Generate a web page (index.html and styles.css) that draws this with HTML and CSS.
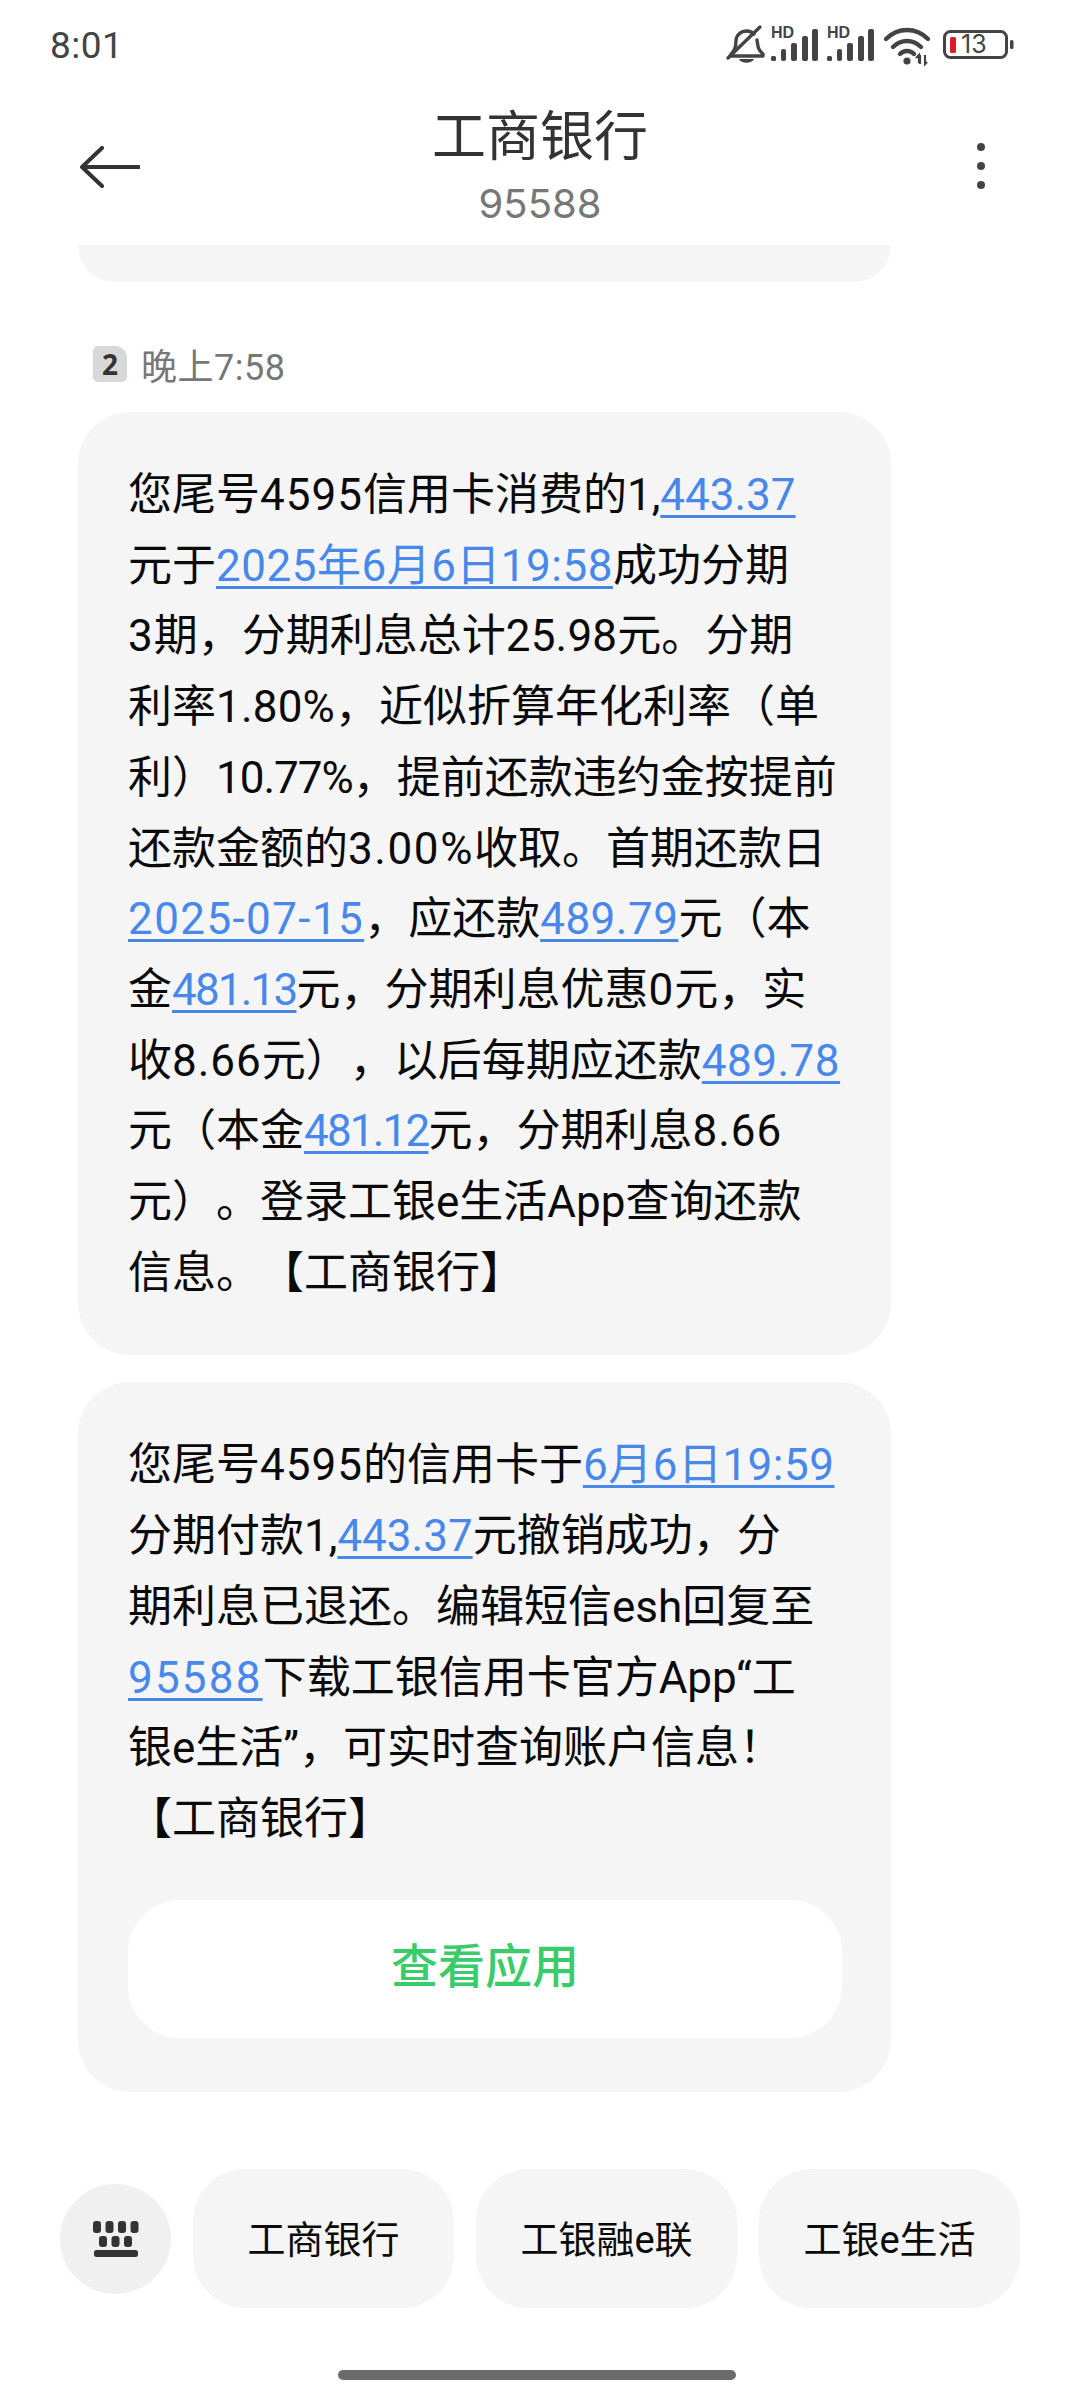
FILE: index.html
```html
<!DOCTYPE html>
<html lang="zh-CN">
<head>
<meta charset="utf-8">
<title>工商银行</title>
<link rel="stylesheet" href="styles.css">
</head>
<body>
<div class="screen">
  <div class="status">
    <span class="time">8:01</span>
    <svg class="status-icons" width="290" height="44" viewBox="0 0 290 44">
      <g fill="none" stroke="#444" stroke-width="3.4" stroke-linecap="round" stroke-linejoin="round">
        <path d="M7 31 C12 27 12 22 12 18 C12 12 17 8 23 8 C26 8 28 9 30 11"/>
        <path d="M33 17 C34 24 34 27 39 31 L39 33 L6 33"/>
        <path d="M4 35 L36 4"/>
      </g>
      <path d="M15 36 H30 C28 41 17 41 15 36 Z" fill="#444"/>
      <g class="sig">
        <text x="47" y="15" class="hd">HD</text>
        <rect x="47" y="33" width="5" height="5" rx="1.5"/>
        <rect x="57" y="26" width="5" height="12" rx="2"/>
        <rect x="67" y="20" width="6" height="18" rx="2"/>
        <rect x="78" y="13" width="6" height="25" rx="2"/>
        <rect x="88" y="6" width="6" height="32" rx="2"/>
      </g>
      <g class="sig">
        <text x="103" y="15" class="hd">HD</text>
        <rect x="103" y="33" width="5" height="5" rx="1.5"/>
        <rect x="113" y="26" width="5" height="12" rx="2"/>
        <rect x="123" y="20" width="6" height="18" rx="2"/>
        <rect x="134" y="13" width="6" height="25" rx="2"/>
        <rect x="144" y="6" width="6" height="32" rx="2"/>
      </g>
      <g fill="none" stroke="#444" stroke-width="4.4" stroke-linecap="round">
        <path d="M162 16 C174 4 192 4 204 16"/>
        <path d="M169 24 C177 16 189 16 197 24"/>
        <path d="M176 31 C180 27 186 27 190 31"/>
      </g>
      <circle cx="183" cy="38" r="3.6" fill="#444"/>
      <path d="M196 32 v9 M192 35 l3 -3 v8 M201 41 v-9 M203 39 l-2 2 v-9" fill="none" stroke="#444" stroke-width="2.2"/>
      <rect x="220.500" y="8.500" width="62" height="26" rx="6" fill="none" stroke="#444" stroke-width="3"/>
      <rect x="226" y="14" width="6" height="16" rx="1.500" fill="#dc1f26"/>
      <text x="237" y="30" class="batt">13</text>
      <rect x="286" y="17" width="3.500" height="9" rx="1.500" fill="#444"/>
    </svg>
  </div>

  <header class="bar">
    <svg class="back" width="60" height="42" viewBox="0 0 60 42">
      <path d="M22 2 L2 21 L22 40 M3 21 H59" fill="none" stroke="#333" stroke-width="4" stroke-linecap="round" stroke-linejoin="round"/>
    </svg>
    <div class="heading">
      <div class="title">工商银行</div>
      <div class="number">95588</div>
    </div>
    <div class="more"><i></i><i></i><i></i></div>
  </header>

  <main class="thread">
    <div class="bubble-tail"></div>
    <div class="stamp"><span class="sim">2</span><span class="stamp-text">晚上7:58</span></div>
    <div class="bubble">您尾号<span class="n">4595</span>信用卡消费的1,<a class="plain">443.37</a><br>元于<a>2025年6月6日19:58</a>成功分期<br><span class="n">3</span>期，分期利息总计<span class="m">25.98</span>元。分期<br>利率<span class="m">1.80%</span>，近似折算年化利率（单<br>利）<span class="one">10.77%</span>，提前还款违约金按提前<br>还款金额的<span class="w">3.00%</span>收取。首期还款日<br><a class="date">2025-07-15</a>，应还款<a>489.79</a>元（本<br>金<a class="one">481.13</a>元，分期利息优惠<span class="n">0</span>元，实<br>收<span class="n">8.66</span>元），以后每期应还款<a>489.78</a><br>元（本金<a class="one">481.12</a>元，分期利息<span class="n">8.66</span><br>元）。登录工银e生活App查询还款<br>信息。【工商银行】</div>
    <div class="bubble bubble-app">您尾号<span class="n">4595</span>的信用卡于<a>6月6日19:59</a><br>分期付款1,<a class="plain">443.37</a>元撤销成功，分<br>期利息已退还。编辑短信esh回复至<br><a class="phone">95588</a>下载工银信用卡官方App“工<br>银e生活”，可实时查询账户信息！<br>【工商银行】
      <div class="app-btn">查看应用</div>
    </div>
  </main>

  <footer class="suggest">
    <div class="kbd">
      <svg width="46" height="36" viewBox="0 0 46 36" fill="#333">
        <rect x="0" y="0" width="8" height="12" rx="3"/><rect x="12.500" y="0" width="8" height="12" rx="3"/><rect x="25" y="0" width="8" height="12" rx="3"/><rect x="37.500" y="0" width="8" height="12" rx="3"/>
        <rect x="6" y="15" width="8" height="11" rx="3"/><rect x="18.500" y="15" width="8" height="11" rx="3"/><rect x="31" y="15" width="8" height="11" rx="3"/>
        <rect x="1" y="29" width="44" height="7" rx="2.500"/>
      </svg>
    </div>
    <div class="chip">工商银行</div>
    <div class="chip">工银融e联</div>
    <div class="chip">工银e生活</div>
  </footer>
  <div class="home-wrap"><div class="home"></div></div>
</div>
</body>
</html>
```
FILE: styles.css
```css
* { box-sizing: border-box; }
html, body { margin: 0; padding: 0; background: #fff; }
body { font-family: Roboto, "Noto Sans CJK SC", "Noto Sans", sans-serif; color: #0a0a0a; text-spacing-trim: space-all; }
.screen { width: 1080px; height: 2400px; display: flex; flex-direction: column; overflow: hidden; }

.status { height: 90px; display: flex; align-items: center; justify-content: space-between; padding: 0 66px 0 50px; }
.time { font-size: 37px; color: #444; font-family: Roboto, sans-serif; letter-spacing: 0.500px; }
.status-icons { display: block; }
.sig { fill: #444; }
.hd { font: 700 16px "Liberation Sans", sans-serif; }
.batt { font: 400 25px Inter, sans-serif; fill: #444; }

.bar { height: 155px; display: flex; align-items: flex-start; justify-content: space-between; padding: 0 95px 0 80px; position: relative; }
.back { display: block; margin-top: 56px; }
.heading { position: absolute; left: 0; width: 1080px; text-align: center; }
.title { font-size: 54px; line-height: 70px; margin-top: 13px; color: #333; }
.number { font-family: Inter, sans-serif; font-size: 40px; line-height: 50px; margin-top: 6px; color: #777; }
.more { display: flex; flex-direction: column; gap: 11px; margin-top: 53px; }
.more i { display: block; width: 8px; height: 8px; border-radius: 50%; background: #444; }

.thread { flex: 1; padding: 0 189px 0 78px; min-height: 0; }
.bubble-tail { height: 37px; background: #f5f5f5; border-radius: 0 0 46px 46px; }
.stamp { display: flex; align-items: center; height: 36px; margin: 64px 0 30px 15px; }
.sim { width: 34px; height: 36px; background: #d8d8d8; border-radius: 5px 12px 5px 5px; font: 700 28px/36px "Noto Sans", sans-serif; color: #333; text-align: center; }
.stamp-text { font-size: 36px; letter-spacing: 0.500px; color: #777; margin-left: 14px; }

.bubble { background: #f5f5f5; border-radius: 52px; padding: 48px 30px 47px 50px; font-size: 44px; line-height: 70.700px; white-space: nowrap; }
.bubble + .bubble { margin-top: 27px; }
.bubble a { color: #4788ea; letter-spacing: 0.500px; text-decoration: underline; text-decoration-thickness: 2.500px; text-underline-offset: 5px; }
.bubble a.plain { letter-spacing: 0; }
.bubble a.date { letter-spacing: 1.400px; }
.bubble a.phone { letter-spacing: 2.200px; }
.bubble a.one { letter-spacing: -1.800px; }
.n { letter-spacing: 1px; }
.m { letter-spacing: 0.200px; }
.w { letter-spacing: 1.600px; }
.one { letter-spacing: -1px; }
.bubble-app { padding-bottom: 54px; }
.app-btn { width: 714px; height: 138px; margin-top: 45px; padding-bottom: 2px; background: #fff; border-radius: 52px; display: flex; align-items: center; justify-content: center; font-size: 47px; color: #3ccb6b; font-weight: 500; }

.suggest { display: flex; align-items: center; gap: 22px; padding: 0 54px 0 60px; height: 139px; margin-bottom: 62px; }
.kbd { width: 111px; height: 110px; border-radius: 50%; background: #f0f0f0; display: flex; align-items: center; justify-content: center; }
.chip { width: 261px; height: 139px; padding-bottom: 4px; background: #f5f5f5; border-radius: 52px; display: flex; align-items: center; justify-content: center; font-size: 38px; color: #0a0a0a; }

.home-wrap { height: 30px; display: flex; justify-content: center; }
.home { width: 398px; height: 10px; border-radius: 5px; background: #6b6b6b; margin-left: -6px; }
```
